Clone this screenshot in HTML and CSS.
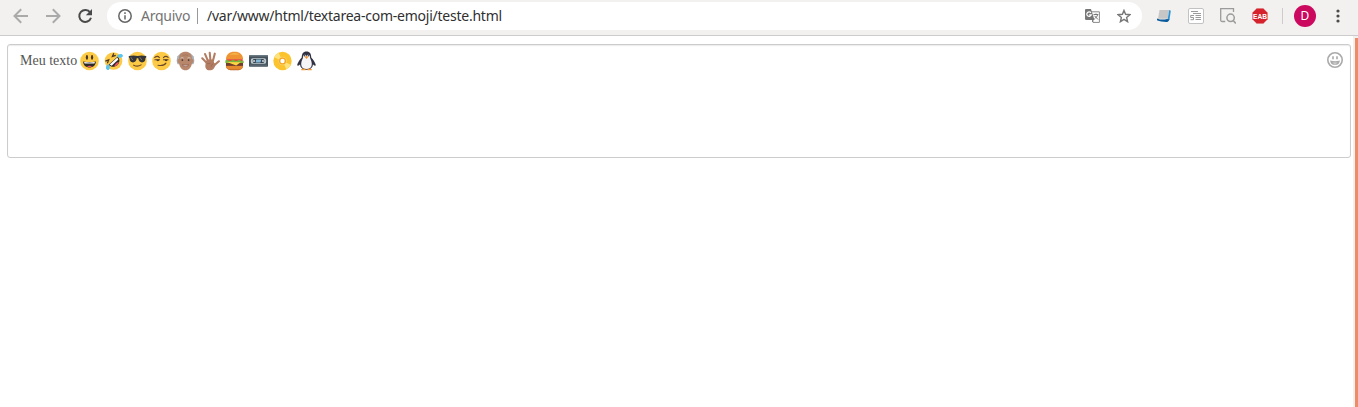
FILE: index.html
```html
<!DOCTYPE html>
<html lang="pt-BR">
<head>
<meta charset="utf-8">
<title>teste.html</title>
<link rel="stylesheet" href="styles.css">
</head>
<body>
<header class="toolbar">
  <nav class="nav">
    <svg class="muted" viewBox="0 0 16 16"><path d="M15 8H2M8.2 1.3 1.5 8l6.7 6.7"/></svg>
    <svg class="muted" viewBox="0 0 16 16"><path d="M1 8h13M7.8 1.3 14.5 8l-6.7 6.7"/></svg>
    <svg class="reload" viewBox="0 0 16 16"><path d="M13.2 4.5A6 6 0 1 0 14 9.8"/><path class="tip" d="M15 1v6.2H8.8z"/></svg>
  </nav>
  <div class="address">
    <svg class="info" viewBox="0 0 14 14"><circle cx="7" cy="7" r="6.2"/><path d="M7 6.2v4.3M7 3.3v1.6"/></svg>
    <span class="scheme">Arquivo</span>
    <span class="divider"></span>
    <span class="url">/var/www/html/textarea-com-emoji/teste.html</span>
    <svg class="translate" viewBox="0 0 15 14"><path fill="#fff" stroke="#8b8b8b" d="M5.5 2.8h8.9v10.6H8z"/><path fill="#777" d="M1 0h5l3.5 11H1.2Q0 11 0 9.8V1Q0 0 1 0z"/><path fill="none" stroke="#fff" stroke-width="1.2" d="M6 3.8a2.3 2.3 0 1 0 .3 2.1H4.2"/><path fill="none" stroke="#777" d="M8.5 5.5h4.8M11 4.5v1M12.6 5.7c-.5 2-1.8 3.2-3.2 4.2M9.5 6.8l3.5 3.7M8 11l-.5 2"/></svg>
    <svg class="star" viewBox="0 0 14 14"><path d="m7 1.4 1.6 3.9 4.3.4-3.3 2.8 1 4.2L7 10.4l-3.6 2.3 1-4.2L1.1 5.7l4.3-.4z"/></svg>
  </div>
  <div class="extensions">
    <svg viewBox="0 0 16 16"><path fill="#c6c6c6" d="M3.5 2h9.7L11.6 10.8H2z"/><path fill="#2c93d5" d="m13.2 2 1.6.7-1.3 9-2 .5z"/><path fill="#085a9c" d="M1 10.4c3 1.2 6.5 1.7 10 .6l2.5.4c-1 1.9-1.8 2.5-3.2 2.5-3.3 0-6.7-.5-9.3-1.7z"/></svg>
    <svg viewBox="0 0 16 16"><rect x=".5" y=".5" width="15" height="15" rx="1.5" fill="#fff" stroke="#c2c2c2"/><path fill="none" stroke="#9b9b9b" d="M3 3.5h7M5 5.5h8M7.5 7.5H13M7.5 9.5H13M7.5 11.5H13M6 7.5H2.7v2h2.8v2.2H2.5"/></svg>
    <svg viewBox="0 0 16 16"><path fill="none" stroke="#9b9b9b" stroke-width="1.3" d="M5.2 13.5H2.2q-1.5 0-1.5-1.5V.7h12.8v3.4"/><circle cx="10.6" cy="9.8" r="3.7" fill="none" stroke="#9b9b9b" stroke-width="1.5"/><path stroke="#9b9b9b" stroke-width="1.5" d="m13.2 12.5 2.6 3"/></svg>
    <svg viewBox="0 0 16 16"><path fill="#d5222c" stroke="#e6aaaa" stroke-width=".6" d="M4.8.3h6.4l4.5 4.5v6.4l-4.5 4.5H4.8L.3 11.2V4.8z"/><text class="eab" x="8" y="10.5" text-anchor="middle" textLength="14" lengthAdjust="spacingAndGlyphs">EAB</text></svg>
  </div>
  <span class="separator"></span>
  <span class="avatar">D</span>
  <svg class="menu" viewBox="0 0 4 14"><circle cx="2" cy="2" r="1.6"/><circle cx="2" cy="7" r="1.6"/><circle cx="2" cy="12" r="1.6"/></svg>
</header>
<main class="page">
  <div class="editor">
    <span class="message">Meu texto</span>
    <div class="emojis">
      <svg viewBox="0 0 20 20"><circle class="face" cx="10" cy="10" r="9.8"/><ellipse cx="7.3" cy="6.2" rx="1.2" ry="2.4" fill="#4b3528"/><ellipse cx="12.7" cy="6.2" rx="1.2" ry="2.4" fill="#4b3528"/><path fill="#302b2b" d="M3.3 10.5q6.7 1.2 13.4 0c0 8.4-13.4 8.4-13.4 0z"/><path fill="#fff" d="M4.3 11q5.7 1 11.4 0l-.5 1.5H4.8z"/><path fill="#ed5368" d="M7.3 15.7q2.7-1.3 5.4 0-2.7 1.5-5.4 0z"/></svg>
      <svg viewBox="0 0 20 20"><circle class="face" cx="10" cy="10" r="9.3"/><g transform="rotate(-43 10 10)"><path d="m3.7 4.2 3.4 1.5-3.4 1.6M15.8 4.2l-3.4 1.5 3.4 1.6" fill="none" stroke="#4b3528" stroke-width="1.3"/><path fill="#302b2b" d="M3.5 9.5h13c0 8.5-13 8.5-13 0z"/><path fill="#fff" d="M4.5 10h11l-.7 2.3H5.2z"/><path fill="#ed5368" d="M6.5 14.7q3.5-2 7 0-3.5 2.4-7 0z"/><path fill="#58c4ef" d="M3.7 8.5C.4 8.2-2 10-1.3 12.2S4 13.6 3.7 8.5zM16.3 8.5c3.3-.3 5.7 1.5 5 3.7s-5.3 1.4-5-3.7z"/></g></svg>
      <svg viewBox="0 0 20 20"><circle class="face" cx="10" cy="10" r="9.8"/><path fill="#353538" d="M.8 4.8q5-1.2 9.2 0 4.2-1.2 9.2 0v1.6l-.8.5c-.2 3-1 4.6-3.6 4.6-2.3 0-3.7-1.6-4-4.3H9.2c-.3 2.7-1.7 4.3-4 4.3-2.6 0-3.4-1.6-3.6-4.6l-.8-.5z"/><path stroke="#77777a" d="m3 6 2 3M12.5 6l2 3"/><path fill="none" stroke="#6d4a28" stroke-width="1.2" stroke-linecap="round" d="M6 14.4q4 2.2 7.8-.3"/></svg>
      <svg viewBox="0 0 20 20"><circle class="face" cx="10" cy="10" r="9.8"/><path fill="none" stroke="#69482b" stroke-width="1.1" stroke-linecap="round" d="M2.8 6.3q3-2.3 5 .1M12 6.4q2.5-2.4 5-.1M3 8.7h5M12 8.7h5M6.3 14.5c4 .6 6.8.1 8.4-2.3"/><path fill="#49362b" d="M4.5 8.5h3.2c-.1 2.5-3 2.3-3.2 0zM13.2 8.5h3.2c-.1 2.5-3 2.3-3.2 0z"/></svg>
      <svg viewBox="0 0 20 20"><path fill="#a8b0b5" d="M1.6 5Q-.2 10 1.8 13.5h16.4q2-3.5.2-8.5L15.5 2h-11z"/><path fill="#b8866b" d="M3.2 8C3.3 2.8 5.5.3 10 .3s6.7 2.5 6.8 7.7c2.3-.2 2 4.4 0 4-.5 4.5-3.3 7.7-6.8 7.7S3.7 16.5 3.2 12C1.2 12.4.9 7.8 3.2 8z"/><path fill="none" stroke="#9b6b54" stroke-width=".6" d="M7 4q3-.8 6 0"/><path fill="none" stroke="#cfc5bd" d="M4.7 7q1.7-1.3 3.4 0M11.9 7q1.7-1.3 3.4 0"/><circle cx="6.7" cy="9" r=".9" fill="#453832"/><circle cx="13.3" cy="9" r=".9" fill="#453832"/><path fill="#fff" stroke="#855343" stroke-width=".7" d="M6.5 14q3.5.8 7 0-3.5 3.4-7 0z"/></svg>
      <svg viewBox="0 0 20 20"><path fill="none" stroke="#b27d62" stroke-width="2.2" stroke-linecap="round" d="M6.5 12.5 1.3 7.2M7.5 10.5 4.3 2.7M10 10 9.2 1.4M12.5 10l2-7.7M14 14.5l4.8-4.2"/><path fill="#b27d62" d="m5.2 10 2.5-1.7h4.7l1.7 4 1.5.6c-1.1 3.6-1.9 6.9-6.5 6.9-3.8 0-5-2.9-4.4-5.9z"/><path fill="none" stroke="#936451" stroke-width=".7" d="M13 12.8c-1.5.7-2.2 1.8-2.4 3.2M6.2 13l3.8-.6"/></svg>
      <svg viewBox="0 0 20 20"><path fill="#b75d20" d="M1 15h18c0 3.3-3 4.7-6 4.7H7C4 19.7 1 18.3 1 15z"/><path fill="#ef9433" d="M1 8C1.2 3 4.5.3 10 .3S18.8 3 19 8z"/><path fill="#f3b34a" d="M4.5 3.5C8 .7 12.8 1 15.2 3.3z"/><path fill="#e64b35" d="M1.3 8h17.4v2.4H1.3z"/><path fill="#743d28" d="M1 11.7h18v3.5H1z"/><path fill="#78b53b" d="M.4 9.5q1.6-1.6 3.2 0t3.2 0 3.2 0 3.2 0 3.2 0 3.2 0v2.7H.4z"/><path fill="#ffd642" d="m2 11 14.5.2-4.7 3.5z"/><path fill="#e68a30" d="M1 15.3h18c-.3 2.3-1.5 3.3-3.4 3.7H4.4C2.5 18.6 1.2 17.6 1 15.3z"/></svg>
      <svg viewBox="0 0 20 20"><rect y="4" width="20" height="12" rx=".7" fill="#46535d"/><path fill="#687982" d="M0 4h20v1.2H0zM1 14h18v.8H1z"/><rect x="2" y="7" width="16" height="6" rx="2" fill="#bcc9d0"/><rect x="4" y="7.8" width="12" height="4.4" rx="1.5" fill="#39434b"/><path fill="#82b8d7" d="M7.5 8.3h5.5l-1 3.4H7z"/><circle cx="5.3" cy="10" r="1" fill="#d6dfe4"/><circle cx="14.7" cy="10" r="1" fill="#d6dfe4"/></svg>
      <svg viewBox="0 0 20 20"><circle cx="10" cy="10" r="9.7" fill="#fbc42e"/><path fill="#fee27d" d="M10 10 1.2 6A9.7 9.7 0 0 1 6 1.2zM10 10l8.8 4a9.7 9.7 0 0 1-4.8 4.8z"/><circle cx="10" cy="10" r="4.4" fill="#ffd768"/><circle cx="10" cy="10" r="3" fill="#fff" stroke="#f3a52c" stroke-width="1.4"/></svg>
      <svg viewBox="0 0 20 20"><path fill="#303142" d="M10 0c3.6 0 4.9 2.4 5 6.2 1.6 1.9 4.6 5.3 4.8 8.4-.9 1.2-2.4-.3-3-1.1-.2 3.8-2.8 5.8-6.8 5.8s-6.6-2-6.8-5.8c-.6.8-2.1 2.3-3 1.1.2-3.1 3.2-6.5 4.8-8.4C5.1 2.4 6.4 0 10 0z"/><path fill="#f5f5f7" d="M10 5c-1.4-2.8-3.8-1.6-3.6.8.1 1.6-2 4-2 7.4 0 3.5 2 5.3 5.6 5.3s5.6-1.8 5.6-5.3c0-3.4-2.1-5.8-2-7.4.2-2.4-2.2-3.6-3.6-.8z"/><circle cx="8" cy="4.5" r=".8" fill="#303142"/><circle cx="12" cy="4.5" r=".8" fill="#303142"/><path fill="#f69834" d="m8 5.6 2-.9 2 .9-2 2.4zM4.5 18.5l4-.6.6 1.9H4.5zM15.5 18.5l-4-.6-.6 1.9h4.6z"/></svg>
    </div>
    <svg class="picker" viewBox="0 0 16 16"><circle cx="8" cy="8" r="7.2"/><path stroke-width="1.3" d="M4 9.5q4 1 8 0c-1 3.6-7 3.6-8 0z"/><path d="M6 4.3v3M10 4.3v3"/></svg>
  </div>
  <div class="edge"></div>
</main>
</body>
</html>
```
FILE: styles.css
```css
* { box-sizing: border-box; }
body { margin: 0; height: 407px; overflow: hidden; background: #fff; display: flex; flex-direction: column; }
svg { display: block; flex: none; }
.toolbar { height: 36px; flex: none; display: flex; align-items: center; padding: 0 18px 3px 13px; background: #f2f1f0; border-bottom: 1px solid #ccc; }
.nav { display: flex; gap: 16px; }
.nav svg { width: 16px; height: 16px; fill: none; stroke-width: 2; }
.muted { stroke: #aaa; }
.reload { stroke: #4a4a4a; }
.reload .tip { fill: #4a4a4a; stroke: none; }
.address { display: flex; align-items: center; width: 1035px; height: 28px; margin-left: 14px; padding: 0 11px; border-radius: 14px; background: #fff; font: 14px/20px "Noto Sans", sans-serif; white-space: nowrap; }
.info { width: 14px; height: 14px; fill: none; stroke: #666; stroke-width: 1.5; }
.scheme { width: 49px; margin-left: 9px; color: #737373; letter-spacing: -.25px; }
.divider { width: 1px; height: 16px; margin: 0 9px 0 7px; background: #999; }
.url { color: #303030; letter-spacing: -.24px; }
.translate { width: 15px; height: 14px; margin-left: auto; }
.star { width: 14px; height: 14px; margin-left: 17px; fill: none; stroke: #777; stroke-width: 1.4; }
.extensions { display: flex; gap: 16px; margin-left: 14px; }
.extensions svg { width: 16px; height: 16px; }
.eab { font: bold 7px "Liberation Sans", sans-serif; fill: #fff; }
.separator { width: 1px; height: 16px; margin: 0 11px 0 14px; background: #ccc; }
.avatar { width: 22px; height: 22px; border-radius: 50%; background: #cb095f; color: #fff; font: 12px/22px "Noto Sans", sans-serif; text-align: center; }
.menu { width: 4px; height: 14px; margin-left: auto; fill: #4a4a4a; }
.page { flex: 1; display: flex; align-items: flex-start; }
.editor { display: flex; align-items: flex-start; width: 1344px; height: 114px; margin: 8px 2px 0 7px; padding: 6px 7px 0 12px; border: 1px solid #ccc; border-radius: 3px; box-shadow: inset 0 1px 1px rgba(0,0,0,.08); }
.message { width: 59.6px; color: #555; font: 14px/20px "Liberation Serif", serif; white-space: nowrap; }
.emojis { display: flex; gap: 5.2px; }
.emojis svg { width: 19px; height: 20px; }
.face { fill: #fcca45; }
.picker { width: 16px; height: 16px; margin: 1px 0 0 auto; fill: none; stroke: #aaa; stroke-width: 1.6; }
.edge { width: 5px; align-self: stretch; border: solid #f2f1f0; border-width: 2px 0 0 2px; background: #ee8c68; }
```
